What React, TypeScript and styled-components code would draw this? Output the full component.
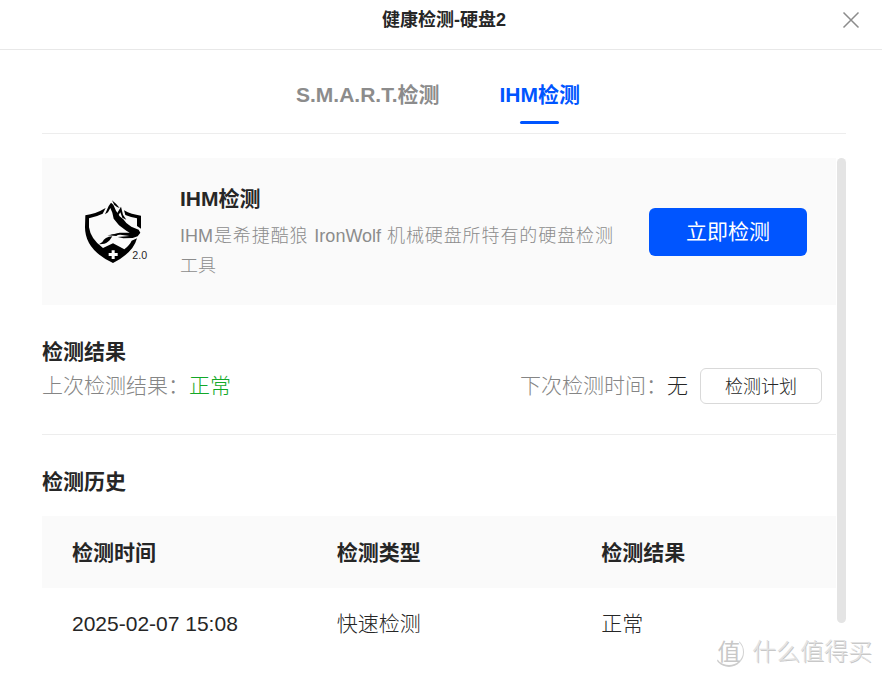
import React from "react";
import styled, { createGlobalStyle } from "styled-components";

const GlobalStyle = createGlobalStyle`
  *, *::before, *::after { box-sizing: border-box; }
  body {
    margin: 0;
    background: #fff;
    color: #262626;
    font-family: "Liberation Sans", "Noto Sans CJK SC", sans-serif;
    font-size: 21px;
    line-height: 30px;
  }
  h1, h2, h3, p { margin: 0; }
  button { font-family: inherit; cursor: pointer; }
`;

const Dialog = styled.main`
  position: relative;
  min-height: 100vh;
  display: flex;
  flex-direction: column;
`;

const TitleBar = styled.header`
  display: grid;
  grid-template-columns: 1fr auto 1fr;
  align-items: center;
  height: 50px;
  padding: 0 20px 10px 26px;
  border-bottom: 1px solid #e8e8e8;
`;

const Title = styled.h1`
  grid-column: 2;
  font-size: 18px;
  line-height: 24px;
`;

const CloseButton = styled.button`
  justify-self: end;
  display: flex;
  padding: 2px;
  border: 0;
  background: none;
  color: #8c8c8c;
`;

const Tabs = styled.nav`
  display: flex;
  justify-content: center;
  gap: 60px;
  height: 84px;
  margin: 0 36px 0 42px;
  padding: 30px 12px 0 0;
  border-bottom: 1px solid #ededed;
`;

const Tab = styled.button<{ $active?: boolean }>`
  display: flex;
  flex-direction: column;
  align-items: center;
  gap: 11px;
  height: 44px;
  padding: 0;
  border: 0;
  background: none;
  color: ${(p) => (p.$active ? "#0055ff" : "#8c8c8c")};
  font-size: 21px;
  font-weight: bold;
  line-height: 30px;

  &::after {
    content: "";
    width: 39px;
    height: 3px;
    border-radius: 2px;
    background: ${(p) => (p.$active ? "#0055ff" : "transparent")};
  }
`;

const ScrollArea = styled.div`
  display: flex;
  gap: 1px;
  margin: 24px 36px 0 42px;
`;

const Content = styled.div`
  flex: 1;
  min-width: 0;
`;

const ScrollThumb = styled.div`
  width: 9px;
  height: 465px;
  border-radius: 5px;
  background: #e4e4e4;
`;

const Card = styled.section`
  display: flex;
  align-items: center;
  height: 147px;
  padding: 0 29px 0 42px;
  background: #fafafa;
`;

const CardText = styled.div`
  flex: 1;
  margin: 0 36px 0 32px;
`;

const Heading = styled.h2`
  font-size: 21px;
  line-height: 32px;
`;

const Description = styled.p`
  margin-top: 6px;
  color: #8c8c8c;
  font-size: 18px;
  font-weight: 300;
  line-height: 30px;
  text-align: justify;
`;

const PrimaryButton = styled.button`
  width: 158px;
  height: 48px;
  padding: 0 0 4px;
  border: 0;
  border-radius: 6px;
  background: #0055ff;
  color: #fff;
  font-size: 21px;
`;

const Results = styled.section`
  padding: 31px 14px 30px 0;
  border-bottom: 1px solid #ededed;
`;

const ResultRow = styled.div`
  display: flex;
  align-items: center;
  justify-content: space-between;
  height: 36px;
`;

const Field = styled.p`
  display: flex;
  align-items: center;
  font-weight: 300;
`;

const Label = styled.span`
  color: #858585;
`;

const Value = styled.span<{ $good?: boolean }>`
  color: ${(p) => (p.$good ? "#12a828" : "#262626")};
`;

const PlanButton = styled.button`
  width: 122px;
  height: 36px;
  margin-left: 12px;
  padding: 0 0 2px;
  border: 1px solid #d9d9d9;
  border-radius: 6px;
  background: #fff;
  color: #262626;
  font-size: 18px;
  font-weight: 300;
`;

const History = styled.section`
  padding-top: 31px;
`;

const HistoryTable = styled.table`
  width: 100%;
  margin-top: 18px;
  border-collapse: collapse;
  table-layout: fixed;
`;

const HeadCell = styled.th`
  height: 72px;
  padding: 2px 0 0 30px;
  background: #fafafa;
  text-align: left;
`;

const Cell = styled.td`
  height: 72px;
  padding: 0 0 0 30px;
  font-weight: 300;
`;

const Watermark = styled.div`
  position: absolute;
  right: 10px;
  bottom: 8px;
  display: flex;
  align-items: center;
  gap: 8px;
  color: #e2e2e2;
  font-size: 24px;
  font-weight: 300;
  line-height: 36px;
  text-shadow: 1px 1px 0 #c8c8c8;
`;

const Seal = styled.span`
  display: flex;
  align-items: center;
  justify-content: center;
  width: 30px;
  height: 30px;
  border: 1px solid transparent;
  border-right-color: #d2d2d2;
  border-bottom: 2px solid #cccccc;
  border-radius: 50%;
  color: #c8c8c8;
  font-size: 23px;
  font-weight: 400;
  text-shadow: none;
`;

const CloseIcon = () => (
  <svg width="18" height="18" viewBox="0 0 18 18" stroke="currentColor" strokeWidth="1.5" aria-hidden="true">
    <path d="M1.5 1.5 16.5 16.5M16.5 1.5 1.5 16.5" />
  </svg>
);

const WolfShield = () => (
  <svg width="64" height="66" viewBox="42 27 192 198" role="img" aria-label="IronWolf Health Management 2.0">
    <path d="M46 76Q77 72 107 54L98 71Q79 80 57 85V112Q62 148 99 174L129 160 163 178Q180 164 185 152L201 145Q190 188 129 219Q45 180 45 112Z" />
    <path d="M162 61Q184 74 213 77V116L201 108V85Q183 82 166 75Z" />
    <path d="M105 73 116 48 123 38 130 44 138 62 149 79 160 88 169 99 184 110 206 119 211 128 203 139 188 144 160 145 143 141 178 138 151 134 120 135 149 128 179 128 169 122 147 106 131 86 127 68 121 54 114 67Z" />
    <path d="M126 31Q142 44 149 54L141 51 133 45ZM153 50 159 74 169 89 157 83 151 67 144 77 140 72Z" />
    <path d="M87 163 97 156Q104 141 127 139L119 151Q109 162 97 162Z" />
    <path d="M112 136 152 130 139 138Z" />
    <path d="M125 181h9v8h9v9h-9v9h-9v-9h-9v-9h9z" fill="#fff" />
    <text x="187" y="206" fontSize="32" fill="#262626">2.0</text>
  </svg>
);

const columns = ["检测时间", "检测类型", "检测结果"];
const records = [["2025-02-07 15:08", "快速检测", "正常"]];

export default function App() {
  return (
    <>
      <GlobalStyle />
      <Dialog>
        <TitleBar>
          <Title>健康检测-硬盘2</Title>
          <CloseButton type="button" aria-label="关闭">
            <CloseIcon />
          </CloseButton>
        </TitleBar>
        <Tabs>
          <Tab type="button">S.M.A.R.T.检测</Tab>
          <Tab type="button" $active aria-current="page">IHM检测</Tab>
        </Tabs>
        <ScrollArea>
          <Content>
            <Card>
              <WolfShield />
              <CardText>
                <Heading>IHM检测</Heading>
                <Description>IHM是希捷酷狼 IronWolf 机械硬盘所特有的硬盘检测工具</Description>
              </CardText>
              <PrimaryButton type="button">立即检测</PrimaryButton>
            </Card>
            <Results>
              <Heading>检测结果</Heading>
              <ResultRow>
                <Field>
                  <Label>上次检测结果：</Label>
                  <Value $good>正常</Value>
                </Field>
                <Field as="div">
                  <Label>下次检测时间：</Label>
                  <Value>无</Value>
                  <PlanButton type="button">检测计划</PlanButton>
                </Field>
              </ResultRow>
            </Results>
            <History>
              <Heading>检测历史</Heading>
              <HistoryTable>
                <thead>
                  <tr>
                    {columns.map((name) => (
                      <HeadCell key={name} scope="col">{name}</HeadCell>
                    ))}
                  </tr>
                </thead>
                <tbody>
                  {records.map((record) => (
                    <tr key={record[0]}>
                      {record.map((text) => (
                        <Cell key={text}>{text}</Cell>
                      ))}
                    </tr>
                  ))}
                </tbody>
              </HistoryTable>
            </History>
          </Content>
          <ScrollThumb />
        </ScrollArea>
        <Watermark>
          <Seal>值</Seal>
          <span>什么值得买</span>
        </Watermark>
      </Dialog>
    </>
  );
}
